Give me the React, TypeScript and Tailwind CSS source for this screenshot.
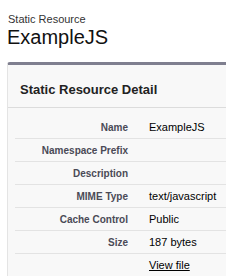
const rows = [
  { label: "Name", value: "ExampleJS" },
  { label: "Namespace Prefix", value: "" },
  { label: "Description", value: "" },
  { label: "MIME Type", value: "text/javascript" },
  { label: "Cache Control", value: "Public" },
  { label: "Size", value: "187 bytes" },
];

export default function App() {
  return (
    <div className="h-[276px] w-[226px] overflow-hidden bg-white font-['Liberation_Sans',Arial,sans-serif]">
      <div className="pl-[8px] pt-[13px]">
        <div className="text-[11px] leading-[13px] text-[#333]">Static Resource</div>
        <div className="text-[20px] leading-[22px] text-[#111] -ml-[1px]">ExampleJS</div>
      </div>

      <div className="ml-[7px] mt-[14px] rounded-tl-[3px] border-t-[3px] border-l border-t-[#7f7f8f] border-l-[#e4e4e4] bg-[#f8f8f8]">
        <div className="border-b border-[#dcdcdc] pl-[12px] pt-[17px] pb-[9px] text-[13px] font-bold leading-[16px] text-[#222]">
          Static Resource Detail
        </div>
        <div className="ml-[7px] pt-[8px]">
          {rows.map((r) => (
            <div
              key={r.label}
              className="flex h-[23px] items-center border-b border-[#e3e3e3]"
            >
              <div className="w-[113px] text-right text-[10px] font-bold text-[#4a4a56]">
                {r.label}
              </div>
              <div className="pl-[21px] text-[11px] text-black">{r.value}</div>
            </div>
          ))}
          <div className="flex h-[23px] items-center">
            <div className="w-[113px]" />
            <div className="pl-[21px] text-[11px] text-black underline">View file</div>
          </div>
        </div>
      </div>
    </div>
  );
}
